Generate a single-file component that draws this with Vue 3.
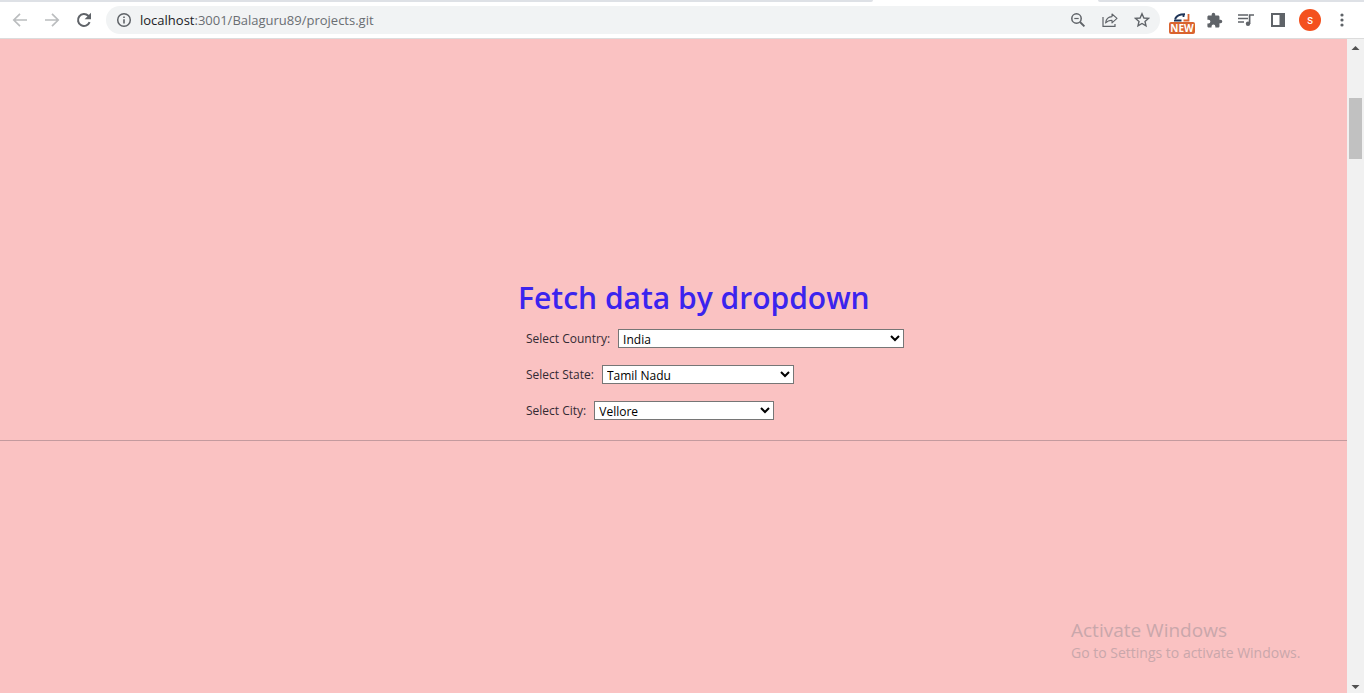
<script setup>
import { ref } from 'vue'

const address = ref('localhost:3001/Balaguru89/projects.git')
const country = ref('India')
const state = ref('Tamil Nadu')
const city = ref('Vellore')
</script>

<template>
  <div class="browser">
    <div class="tabs"><span class="tab-edge left"></span><span class="tab-edge right"></span></div>
    <header class="toolbar">
      <button class="tool faded" aria-label="Back">
        <svg width="16" height="16" viewBox="0 0 16 16"><path d="M15 8H2M8 1.8 1.8 8 8 14.2" fill="none" stroke="currentColor" stroke-width="1.7" /></svg>
      </button>
      <button class="tool faded" aria-label="Forward">
        <svg width="16" height="16" viewBox="0 0 16 16"><path d="M1 8h13M8 1.8 14.2 8 8 14.2" fill="none" stroke="currentColor" stroke-width="1.7" /></svg>
      </button>
      <button class="tool" aria-label="Reload">
        <svg width="16" height="16" viewBox="0 0 16 16"><path d="M13.6 10.2A6 6 0 1 1 12.3 3.8L14 5.4" fill="none" stroke="currentColor" stroke-width="2" /><path d="M15 .8v6.4H8.6z" fill="currentColor" /></svg>
      </button>

      <div class="omnibox">
        <button class="info" aria-label="View site information">
          <svg width="16" height="16" viewBox="0 0 16 16"><circle cx="8" cy="8" r="6.3" fill="none" stroke="currentColor" stroke-width="1.5" /><path d="M8 7.2v4.2M8 4.4V6" stroke="currentColor" stroke-width="1.6" /></svg>
        </button>
        <a class="url" :href="'#' + address"><span class="host">localhost</span>:3001/Balaguru89/projects.git</a>
        <button class="tool" aria-label="Zoom">
          <svg width="16" height="16" viewBox="0 0 16 16"><circle cx="6.5" cy="6.5" r="4.7" fill="none" stroke="currentColor" stroke-width="1.5" /><path d="M10 10l4.4 4.4" stroke="currentColor" stroke-width="1.9" /><path d="M4.3 6.5h4.4" stroke="currentColor" stroke-width="1.2" /></svg>
        </button>
        <button class="tool" aria-label="Share this page">
          <svg width="18" height="16" viewBox="0 0 18 16"><path d="M2 5v9.4h12V12" fill="none" stroke="currentColor" stroke-width="1.2" /><path d="M4.6 11C5 7 7.2 4.8 11 4.6V2l5 4.4-5 4.4V8.2C8.2 8.2 6.2 9 4.6 11z" fill="none" stroke="currentColor" stroke-width="1.1" stroke-linejoin="round" /></svg>
        </button>
        <button class="tool" aria-label="Bookmark this tab">
          <svg width="16" height="16" viewBox="0 0 16 16"><path d="M8 1.8 9.9 6l4.5.4-3.4 3 1 4.4L8 11.5l-4 2.3 1-4.4-3.4-3L6.1 6z" fill="none" stroke="currentColor" stroke-width="1.4" /></svg>
        </button>
      </div>

      <button class="tool ext" aria-label="Extension">
        <svg width="18" height="9" viewBox="0 0 18 9"><path d="M1 7.5h7.5M2 6C4 2.500 6 1.2 12 1.2" fill="none" stroke="#1f3558" stroke-width="2" /><path d="M15.5 1v6.5h-5" fill="none" stroke="#d9632f" stroke-width="1.8" /><path d="M10.5 1.2V4" stroke="#1f3558" stroke-width="1.8" /></svg>
        <span class="badge">NEW</span>
      </button>
      <button class="tool" aria-label="Extensions">
        <svg width="17" height="17" viewBox="0 0 24 24"><path fill="currentColor" d="M20.5 11H19V7c0-1.1-.9-2-2-2h-4V3.5a2.5 2.5 0 0 0-5 0V5H4c-1.1 0-2 .9-2 2v3.8h1.5a2.7 2.7 0 0 1 0 5.4H2V20c0 1.1.9 2 2 2h3.8v-1.5a2.7 2.7 0 0 1 5.4 0V22H17c1.1 0 2-.9 2-2v-4h1.5a2.5 2.5 0 0 0 0-5z" /></svg>
      </button>
      <button class="tool" aria-label="Media controls">
        <svg width="18" height="16" viewBox="0 0 18 16"><path d="M1 3h10M1 6.5h10M1 10h6" stroke="currentColor" stroke-width="1.5" /><circle cx="11" cy="11.8" r="2.2" fill="currentColor" /><path d="M12.6 12V3H17" fill="none" stroke="currentColor" stroke-width="1.7" /></svg>
      </button>
      <button class="tool" aria-label="Side panel">
        <svg width="16" height="16" viewBox="0 0 16 16"><path fill="currentColor" fill-rule="evenodd" d="M1 1h14v14H1zM3 3v10h6.5V3z" /></svg>
      </button>
      <button class="tool" aria-label="Profile"><span class="avatar">s</span></button>
      <button class="tool" aria-label="Menu">
        <svg width="16" height="16" viewBox="0 0 16 16"><circle cx="8" cy="3" r="1.6" fill="currentColor" /><circle cx="8" cy="8" r="1.6" fill="currentColor" /><circle cx="8" cy="13" r="1.6" fill="currentColor" /></svg>
      </button>
    </header>

    <div class="viewport">
      <main class="page">
        <form class="lookup">
          <h1>Fetch data by dropdown</h1>
          <div class="row">
            <label for="country">Select Country:</label>
            <select id="country" v-model="country" class="wide"><option>India</option></select>
          </div>
          <div class="row">
            <label for="state">Select State:</label>
            <select id="state" v-model="state" class="medium"><option>Tamil Nadu</option></select>
          </div>
          <div class="row">
            <label for="city">Select City:</label>
            <select id="city" v-model="city" class="narrow"><option>Vellore</option></select>
          </div>
        </form>
        <hr />
      </main>
      <div class="scrollbar">
        <svg class="arrow" width="17" height="17" viewBox="0 0 17 17"><path d="M4.5 11l4-4 4 4z" fill="#505050" /></svg>
        <div class="track"><div class="thumb"></div></div>
        <svg class="arrow" width="17" height="17" viewBox="0 0 17 17"><path d="M4.5 9h8l-4 4z" fill="#505050" /></svg>
      </div>
      <aside class="watermark">
        <p class="big">Activate Windows</p>
        <p class="small">Go to Settings to activate Windows.</p>
      </aside>
    </div>
  </div>
</template>

<style>
body {
  margin: 0;
}
</style>

<style scoped>
.browser {
  display: flex;
  flex-direction: column;
  height: 100vh;
  font-family: "Open Sans", "Noto Sans", sans-serif;
  background: #fff;
}
.tabs {
  display: flex;
  justify-content: space-between;
  height: 2px;
}
.tab-edge {
  background: #dee1e6;
}
.tab-edge.left {
  width: 64%;
  border-bottom-right-radius: 4px;
}
.tab-edge.right {
  width: 266px;
  border-bottom-left-radius: 4px;
}
.toolbar {
  display: flex;
  align-items: center;
  height: 36px;
  padding: 0 6px 0 4px;
  border-bottom: 1px solid #dcdcdc;
  color: #5f6368;
}
button {
  display: flex;
  align-items: center;
  justify-content: center;
  padding: 0;
  border: 0;
  background: none;
  color: inherit;
  font: inherit;
}
.tool {
  flex: none;
  width: 32px;
  height: 28px;
}
.faded {
  color: #bbbdbf;
}
.omnibox {
  display: flex;
  flex: 1;
  align-items: center;
  height: 28px;
  margin: 0 6px;
  padding: 0 2px 0 10px;
  border-radius: 14px;
  background: #f1f3f4;
}
.info {
  width: 16px;
  height: 16px;
}
.url {
  flex: 1;
  margin-left: 8px;
  color: #6a6e73;
  font-size: 13px;
  line-height: 20px;
  text-decoration: none;
}
.host {
  color: #202124;
}
.ext {
  flex-direction: column;
  justify-content: flex-end;
}
.badge {
  width: 26px;
  border-radius: 2px;
  background: #d9632f;
  color: #fff;
  font-size: 10px;
  font-weight: 700;
  line-height: 12px;
}
.avatar {
  width: 22px;
  height: 22px;
  border-radius: 50%;
  background: #f4511e;
  color: #fff;
  font-family: Roboto, sans-serif;
  font-size: 12px;
  line-height: 22px;
}
.viewport {
  position: relative;
  display: flex;
  flex: 1;
  min-height: 0;
}
.page {
  flex: 1;
  background: #fac2c2;
}
.lookup {
  display: flex;
  flex-direction: column;
  gap: 16px;
  padding: 238px 0 0 518px;
}
h1 {
  margin: 0 0 -6px;
  color: #3b24ee;
  font-size: 30px;
  font-weight: 600;
  line-height: 41px;
}
.row {
  display: flex;
  align-items: center;
  gap: 8px;
  height: 20px;
  padding-left: 8px;
  color: #332a33;
  font-size: 12px;
}
select {
  box-sizing: border-box;
  height: 19px;
  padding: 0;
  border: 1px solid #767676;
  border-radius: 0;
  background-color: #fff;
  color: #000;
  font-family: inherit;
  font-size: 12px;
}
.wide {
  width: 286px;
}
.medium {
  width: 192px;
}
.narrow {
  width: 180px;
}
hr {
  height: 1px;
  margin: 20px 0 0;
  border: 0;
  background: #c39a9e;
}
.scrollbar {
  display: flex;
  flex-direction: column;
  width: 17px;
  background: #f1f1f1;
}
.arrow {
  display: block;
  flex: none;
}
.track {
  flex: 1;
  padding: 42px 2px 0;
}
.thumb {
  height: 61px;
  background: #c1c1c1;
}
.watermark {
  position: absolute;
  right: 60px;
  bottom: 30px;
  width: 233px;
  color: #c9a7ab;
}
.watermark p {
  margin: 0;
}
.big {
  font-size: 19px;
  line-height: 26px;
}
.small {
  font-size: 14px;
  line-height: 20px;
}
</style>
